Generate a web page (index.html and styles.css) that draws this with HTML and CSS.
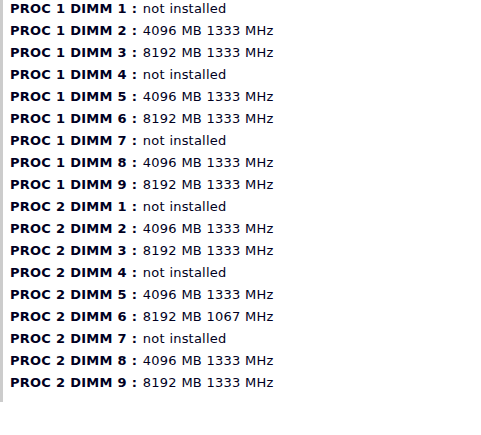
FILE: index.html
```html
<!DOCTYPE html>
<html>
<head>
<meta charset="utf-8">
<link rel="stylesheet" href="styles.css">
</head>
<body>
<div class="panel">
  <ul class="dimms">
    <li><b>PROC 1 DIMM 1 :</b> not installed</li>
    <li><b>PROC 1 DIMM 2 :</b> 4096 MB 1333 MHz</li>
    <li><b>PROC 1 DIMM 3 :</b> 8192 MB 1333 MHz</li>
    <li><b>PROC 1 DIMM 4 :</b> not installed</li>
    <li><b>PROC 1 DIMM 5 :</b> 4096 MB 1333 MHz</li>
    <li><b>PROC 1 DIMM 6 :</b> 8192 MB 1333 MHz</li>
    <li><b>PROC 1 DIMM 7 :</b> not installed</li>
    <li><b>PROC 1 DIMM 8 :</b> 4096 MB 1333 MHz</li>
    <li><b>PROC 1 DIMM 9 :</b> 8192 MB 1333 MHz</li>
    <li><b>PROC 2 DIMM 1 :</b> not installed</li>
    <li><b>PROC 2 DIMM 2 :</b> 4096 MB 1333 MHz</li>
    <li><b>PROC 2 DIMM 3 :</b> 8192 MB 1333 MHz</li>
    <li><b>PROC 2 DIMM 4 :</b> not installed</li>
    <li><b>PROC 2 DIMM 5 :</b> 4096 MB 1333 MHz</li>
    <li><b>PROC 2 DIMM 6 :</b> 8192 MB 1067 MHz</li>
    <li><b>PROC 2 DIMM 7 :</b> not installed</li>
    <li><b>PROC 2 DIMM 8 :</b> 4096 MB 1333 MHz</li>
    <li><b>PROC 2 DIMM 9 :</b> 8192 MB 1333 MHz</li>
  </ul>
</div>
</body>
</html>
```
FILE: styles.css
```css
html, body {
  margin: 0;
  padding: 0;
  background: #fff;
}
body {
  font-family: "DejaVu Sans", Verdana, sans-serif;
  font-size: 13px;
  color: #000022;
}
.panel {
  border-left: 3px solid #cccccc;
  padding: 0 0 8px 7px;
  width: 300px;
}
.dimms {
  list-style: none;
  margin: -2px 0 0 0;
  padding: 0;
}
.dimms li {
  line-height: 22px;
  white-space: nowrap;
  letter-spacing: 0.2px;
  word-spacing: 0.3px;
}
.dimms b {
  font-weight: bold;
  margin-right: 1px;
}
```
